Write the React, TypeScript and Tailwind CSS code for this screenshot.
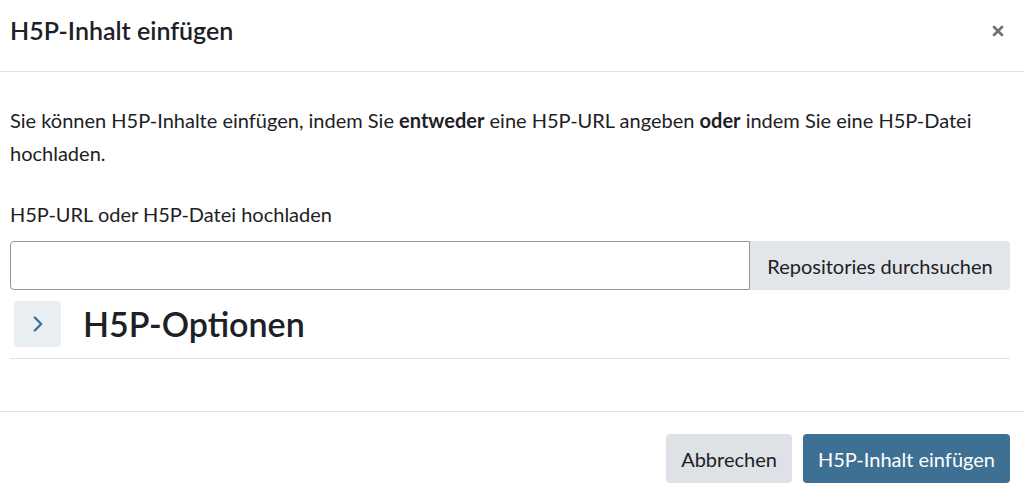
import { ChevronRight, X } from "lucide-react";

export default function App() {
  return (
    <div
      className="w-[1024px] h-[497px] bg-white text-[#1d2125] flex flex-col"
      style={{ fontFamily: "Lato, 'Open Sans', sans-serif" }}
    >
      {/* header */}
      <div className="h-[72px] shrink-0 flex items-center justify-between pl-[10px] pr-[14px] pb-[10px] border-b border-[#dee2e6]">
        <h5 className="text-[25px] font-semibold">H5P-Inhalt einfügen</h5>
        <button className="text-[#6a737b] mr-[4px]">
          <X size={16} strokeWidth={4} />
        </button>
      </div>

      {/* body */}
      <div className="flex-1 pl-[10px] pr-[14px] pt-[32px]">
        <p className="text-[20px] leading-[33px]">
          Sie können H5P-Inhalte einfügen, indem Sie <b>entweder</b> eine H5P-URL angeben <b>oder</b> indem Sie eine H5P-Datei
          hochladen.
        </p>
        <label className="block mt-[29px] text-[20px] leading-[30px]">H5P-URL oder H5P-Datei hochladen</label>
        <div className="flex mt-[12px] h-[49px]">
          <input className="flex-1 border border-[#8f959e] rounded-l-[4px] outline-none" type="text" />
          <button className="w-[260px] bg-[#e2e5e9] rounded-r-[4px] text-[20px]">Repositories durchsuchen</button>
        </div>
        <div className="flex items-center mt-[11px] pl-[4px] pb-[11px] border-b border-[#dee2e6]">
          <div className="w-[47px] h-[46px] rounded-[4px] bg-[#eaeff4] flex items-center justify-center text-[#3e6f96]">
            <ChevronRight size={26} strokeWidth={2.2} />
          </div>
          <h3 className="ml-[22px] text-[34px] leading-[40px] font-semibold">H5P-Optionen</h3>
        </div>
      </div>

      {/* footer */}
      <div className="h-[86px] shrink-0 border-t border-[#dee2e6] flex items-start justify-end gap-[11px] px-[14px] pt-[22px]">
        <button className="h-[49px] px-[15px] rounded-[4px] bg-[#dee2e6] text-[20px]">Abbrechen</button>
        <button className="h-[49px] px-[15px] rounded-[4px] bg-[#3e7094] text-white text-[20px]">H5P-Inhalt einfügen</button>
      </div>
    </div>
  );
}
